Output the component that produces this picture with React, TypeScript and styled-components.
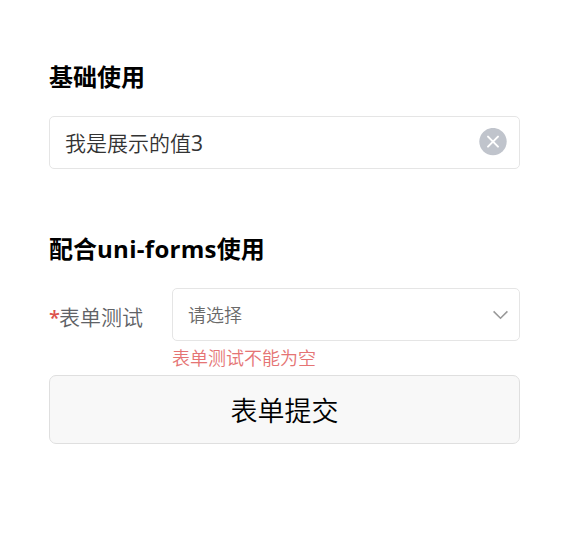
import React from "react";
import styled, { createGlobalStyle } from "styled-components";

const Global = createGlobalStyle`
  * { box-sizing: border-box; }
  body { margin: 0; background: #fff; font-family: "Open Sans", "Noto Sans CJK SC", sans-serif; font-weight: 350; }
`;
const Page = styled.main`
  width: 581px;
  height: 557px;
  padding: 61px 61px 0 49px;
`;
const Title = styled.h2`
  margin: 0 0 23px;
  height: 32px;
  line-height: 32px;
  font-size: 24px;
  font-weight: 700;
  color: #000;
  white-space: nowrap;
`;
const Latin = styled.span`
  letter-spacing: 0.3px;
`;
const Digit = styled.span`
  font-weight: 400;
`;
const Select = styled.div<{ $empty?: boolean }>`
  display: flex;
  align-items: center;
  justify-content: space-between;
  height: 53px;
  padding: 0 ${(p) => (p.$empty ? 11 : 12)}px 0 15px;
  border: 1px solid #e5e5e5;
  border-radius: 5px;
  color: ${(p) => (p.$empty ? "#6a6a6a" : "#333")};
  font-size: ${(p) => (p.$empty ? 18 : 21)}px;
  line-height: 30px;
`;
const ClearIcon = styled.svg`
  margin-bottom: 2px;
`;
const FormSection = styled.section`
  margin-top: 64px;
`;
const FormItem = styled.div`
  display: grid;
  grid-template-columns: 123px 1fr;
`;
const Label = styled.label`
  height: 53px;
  line-height: 58px;
  font-size: 21px;
  color: #606266;
  white-space: nowrap;
`;
const Required = styled.span`
  display: inline-block;
  width: 10px;
  font-size: 20px;
  color: #dd524d;
  font-weight: 600;
`;
const ErrorText = styled.div`
  height: 34px;
  line-height: 34px;
  font-size: 18px;
  color: #e57474;
`;
const Submit = styled.button`
  display: block;
  width: 100%;
  height: 69px;
  padding: 0;
  border: 1px solid #dfdfdf;
  border-radius: 7px;
  background: #f8f8f8;
  color: #000;
  font: 350 27px "Open Sans", "Noto Sans CJK SC", sans-serif;
`;

export default function App() {
  return (
    <Page>
      <Global />
      <section>
        <Title>基础使用</Title>
        <Select>
          <span>我是展示的值<Digit>3</Digit></span>
          <ClearIcon width="28" height="28" viewBox="0 0 28 28">
            <circle cx="14" cy="13.6" r="13.7" fill="#c0c4cc" />
            <path d="M9 8.6l10 10M19 8.6L9 18.6" stroke="#fff" strokeWidth="2" strokeLinecap="round" />
          </ClearIcon>
        </Select>
      </section>
      <FormSection>
        <Title>配合<Latin>uni-forms</Latin>使用</Title>
        <FormItem>
          <Label><Required>*</Required>表单测试</Label>
          <div>
            <Select $empty>
              <span>请选择</span>
              <svg width="16" height="11" viewBox="0 0 16 11">
                <path d="M1.6 2.4l6.9 6.8 6.9-6.8" fill="none" stroke="#999" strokeWidth="1.6" />
              </svg>
            </Select>
            <ErrorText>表单测试不能为空</ErrorText>
          </div>
        </FormItem>
        <Submit>表单提交</Submit>
      </FormSection>
    </Page>
  );
}
